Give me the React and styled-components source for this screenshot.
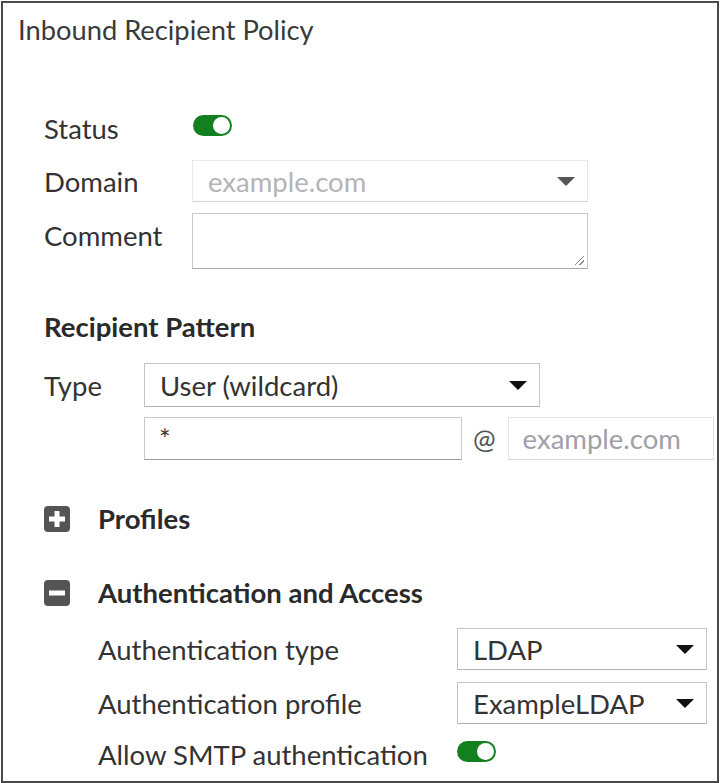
import React from 'react'
import styled, { createGlobalStyle } from 'styled-components'

const GlobalStyle = createGlobalStyle`
    html, body {
        margin: 0;
        padding: 0;
        background: #fff;
    }
    body {
        font-family: Lato, "Open Sans", sans-serif;
        color: #333;
    }
`

const Frame = styled.div`
    box-sizing: border-box;
    width: 718px;
    height: 782px;
    margin: 1px 0 0 1px;
    border: 2px solid #4a4a4a;
    background: #fff;
    padding: 9px 0 0 15px;
    overflow: hidden;
`
const Title = styled.h1`
    margin: 0;
    font-size: 27.3px;
    font-weight: 400;
    color: #3a3a3a;
    line-height: 36px;
`
const Form = styled.div`
    padding: 60px 0 0 26px;
`
const Row = styled.div`
    display: grid;
    grid-template-columns: ${p => p.$label}px auto;
    align-items: center;
    height: ${p => p.$h}px;
    margin-bottom: ${p => p.$mb || 0}px;
`
const Label = styled.div`
    font-size: 27.5px;
    color: #333;
    white-space: nowrap;
    align-self: ${p => p.$top ? 'start' : 'center'};
    padding-top: ${p => p.$top ? 6 : 0}px;
`
const Toggle = styled.div`
    width: 39px;
    height: 21px;
    border-radius: 11px;
    background: #13801f;
    position: relative;
    margin-top: ${p => p.$up ? -6 : 0}px;
    &::after {
        content: '';
        position: absolute;
        right: 2px;
        top: 2px;
        width: 17px;
        height: 17px;
        border-radius: 50%;
        background: #fff;
    }
`
const Select = styled.div`
    box-sizing: border-box;
    width: ${p => p.$w}px;
    height: ${p => p.$h}px;
    border: 1px solid ${p => p.$faint ? '#e8e8ef' : '#c4c4cc'};
    border-bottom-color: ${p => p.$faint ? '#d4d4dc' : '#b0b0b8'};
    display: flex;
    align-items: center;
    justify-content: space-between;
    padding: 0 12px 0 15px;
    font-size: 27.5px;
    color: ${p => p.$faint ? '#b4b4b4' : '#333'};
    background: #fff;
`
const Caret = styled.span`
    width: 0;
    height: 0;
    border-left: 9px solid transparent;
    border-right: 9px solid transparent;
    border-top: 9px solid ${p => p.$faint ? '#555' : '#111'};
`
const TextArea = styled.div`
    box-sizing: border-box;
    width: 396px;
    height: 56px;
    border: 1px solid #c8c8d0;
    border-bottom-color: #aaa;
    position: relative;
    &::after {
        content: '';
        position: absolute;
        right: 3px;
        bottom: 3px;
        width: 9px;
        height: 9px;
        background: linear-gradient(135deg, transparent 45%, #888 45%, #888 55%, transparent 55%, transparent 70%, #888 70%, #888 80%, transparent 80%);
    }
`
const SectionTitle = styled.div`
    font-size: 27.5px;
    font-weight: 700;
    color: #2a2a2a;
    line-height: 30px;
    margin: ${p => p.$m};
`
const Input = styled.div`
    box-sizing: border-box;
    width: ${p => p.$w}px;
    height: 43px;
    border: 1px solid ${p => p.$faint ? '#e4e4ec' : '#c8c8d4'};
    border-bottom-color: ${p => p.$faint ? '#d8d8e0' : '#9a9aa4'};
    display: flex;
    align-items: center;
    padding: 0 14px;
    font-size: 27.5px;
    color: ${p => p.$faint ? '#a0a0a8' : '#333'};
`
const PatternLine = styled.div`
    display: flex;
    align-items: center;
    margin: 10px 0 0 100px;
`
const At = styled.span`
    font-size: 27px;
    color: #555;
    margin: 0 12px 0 11px;
`
const Collapser = styled.div`
    display: flex;
    align-items: center;
    gap: 28px;
    margin: ${p => p.$m};
`
const Box = styled.span`
    width: 26px;
    height: 26px;
    border-radius: 4px;
    background: #545454;
    position: relative;
    &::before, &::after {
        content: '';
        position: absolute;
        background: #fff;
        left: 50%;
        top: 50%;
        transform: translate(-50%, -50%);
    }
    &::before {
        width: 16px;
        height: 5px;
    }
    &::after {
        width: 5px;
        height: ${p => p.$plus ? 16 : 0}px;
    }
`
const SubForm = styled.div`
    padding-left: 54px;
    margin-top: 20px;
`

const App = () => {
    return (
        <>
            <GlobalStyle />
            <Frame>
                <Title>Inbound Recipient Policy</Title>
                <Form>
                    <Row $label={149} $h={40} $mb={12}>
                        <Label>Status</Label>
                        <Toggle $up />
                    </Row>
                    <Row $label={148} $h={42} $mb={11}>
                        <Label>Domain</Label>
                        <Select $w={396} $h={42} $faint>
                            example.com
                            <Caret $faint />
                        </Select>
                    </Row>
                    <Row $label={148} $h={56}>
                        <Label $top>Comment</Label>
                        <TextArea />
                    </Row>
                    <SectionTitle $m="43px 0 21px 0">Recipient Pattern</SectionTitle>
                    <Row $label={100} $h={44}>
                        <Label>Type</Label>
                        <Select $w={396} $h={44}>
                            User (wildcard)
                            <Caret />
                        </Select>
                    </Row>
                    <PatternLine>
                        <Input $w={318}>*</Input>
                        <At>@</At>
                        <Input $w={206} $faint>example.com</Input>
                    </PatternLine>
                    <Collapser $m="44px 0 0 0">
                        <Box $plus />
                        <SectionTitle>Profiles</SectionTitle>
                    </Collapser>
                    <Collapser $m="44px 0 0 0">
                        <Box />
                        <SectionTitle>Authentication and Access</SectionTitle>
                    </Collapser>
                    <SubForm>
                        <Row $label={359} $h={42} $mb={12}>
                            <Label>Authentication type</Label>
                            <Select $w={250} $h={42}>
                                LDAP
                                <Caret />
                            </Select>
                        </Row>
                        <Row $label={359} $h={42} $mb={12}>
                            <Label>Authentication profile</Label>
                            <Select $w={250} $h={42}>
                                ExampleLDAP
                                <Caret />
                            </Select>
                        </Row>
                        <Row $label={359} $h={36}>
                            <Label>Allow SMTP authentication</Label>
                            <Toggle $up />
                        </Row>
                    </SubForm>
                </Form>
            </Frame>
        </>
    )
}

export default App
